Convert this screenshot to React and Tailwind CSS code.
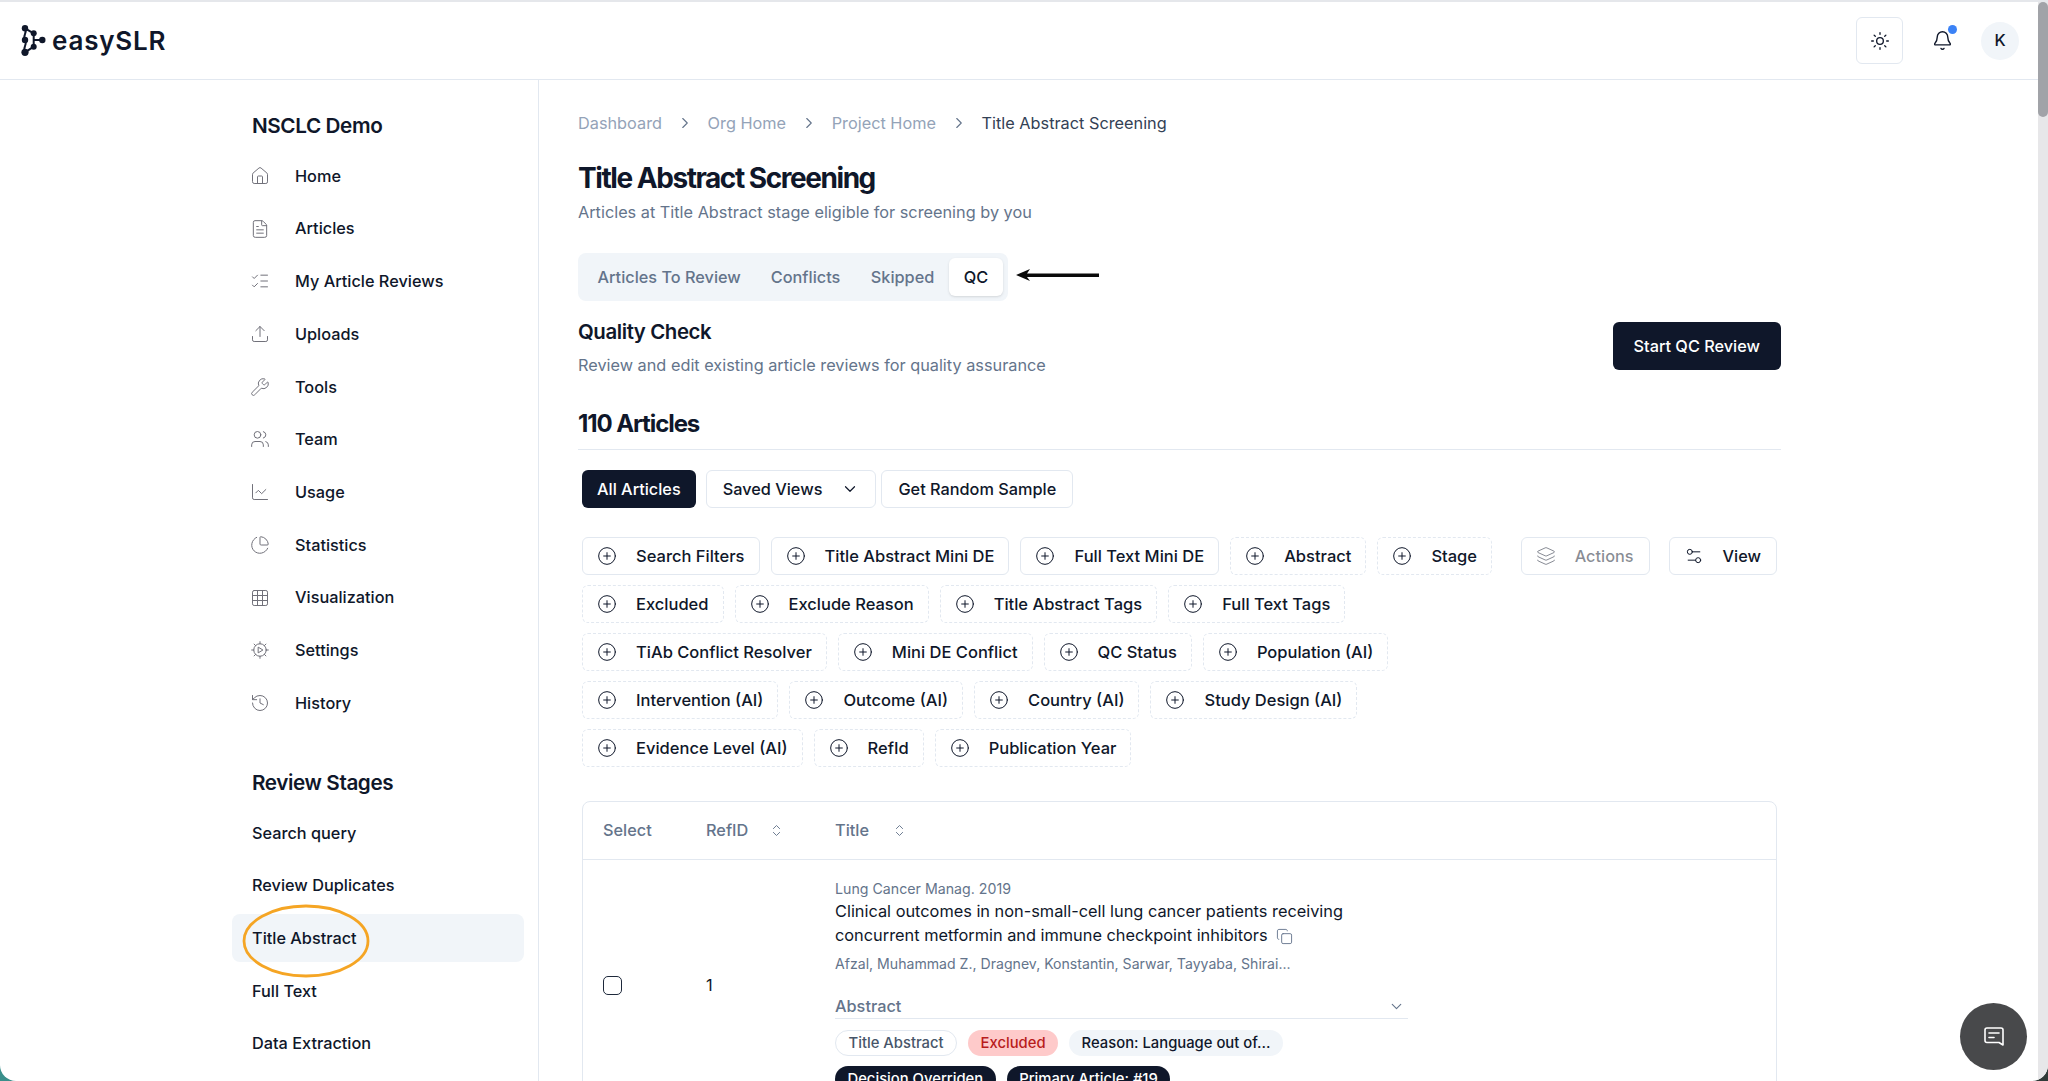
import React from 'react';
import {
  Home, FileText, ListChecks, Upload, Wrench, Users, ChartLine, ChartPie, Grid3x3, History,
  ChevronRight, ChevronDown, ChevronsUpDown, CirclePlus, Layers, Settings2, Sun, Bell, Copy,
} from 'lucide-react';

// the gear in the picture has small teeth and a play triangle inside
const GearPlay = ({ size, strokeWidth, className }) => (
  <svg width={size} height={size} viewBox="0 0 24 24" fill="none" stroke="currentColor" strokeWidth={strokeWidth} strokeLinejoin="round" strokeLinecap="round" className={className}>
    <circle cx="12" cy="12" r="7.5" />
    <path d="M10.2 8.8 L15.5 12 L10.2 15.2 Z" />
    <path d="M12 2 V4.5 M12 19.5 V22 M2 12 H4.5 M19.5 12 H22 M4.9 4.9 L6.7 6.7 M17.3 17.3 L19.1 19.1 M4.9 19.1 L6.7 17.3 M17.3 6.7 L19.1 4.9" />
  </svg>
);

const navItems = [
  { label: 'Home', icon: Home },
  { label: 'Articles', icon: FileText },
  { label: 'My Article Reviews', icon: ListChecks },
  { label: 'Uploads', icon: Upload },
  { label: 'Tools', icon: Wrench },
  { label: 'Team', icon: Users },
  { label: 'Usage', icon: ChartLine },
  { label: 'Statistics', icon: ChartPie },
  { label: 'Visualization', icon: Grid3x3 },
  { label: 'Settings', icon: GearPlay },
  { label: 'History', icon: History },
];

const stages = ['Search query', 'Review Duplicates', 'Title Abstract', 'Full Text', 'Data Extraction'];

const filters = [
  { label: 'Search Filters', solid: true },
  { label: 'Title Abstract Mini DE', solid: true },
  { label: 'Full Text Mini DE', solid: true },
  { label: 'Abstract' },
  { label: 'Stage' },
  { label: 'Excluded' },
  { label: 'Exclude Reason' },
  { label: 'Title Abstract Tags' },
  { label: 'Full Text Tags' },
  { label: 'TiAb Conflict Resolver' },
  { label: 'Mini DE Conflict' },
  { label: 'QC Status' },
  { label: 'Population (AI)' },
  { label: 'Intervention (AI)' },
  { label: 'Outcome (AI)' },
  { label: 'Country (AI)' },
  { label: 'Study Design (AI)' },
  { label: 'Evidence Level (AI)' },
  { label: 'RefId' },
  { label: 'Publication Year' },
];

const Logo = () => (
  <svg width="28" height="36" viewBox="0 0 28 36" className="shrink-0">
    <g fill="none" stroke="#0f172a" strokeWidth="2">
      <path d="M5 5.3 C8 9 2 13 5 17 C8 21 2 25 5 29.3" />
      <path d="M13.7 10.3 V23.7" />
      <path d="M5 29.3 L13.7 23.7" />
      <path d="M5 5.3 L13.7 10.3" />
      <path d="M13.7 17 H22" />
    </g>
    <g fill="#0f172a">
      <circle cx="5" cy="5.3" r="3.2" />
      <circle cx="5" cy="17" r="3.2" />
      <circle cx="5" cy="29.3" r="3.6" />
      <circle cx="13.7" cy="10.3" r="3" />
      <circle cx="13.7" cy="23.7" r="3" />
      <circle cx="22.3" cy="17" r="3.2" />
    </g>
  </svg>
);

const Header = () => (
  <header className="flex h-[78px] items-center justify-between border-b border-[#e2e8f0] pl-5 pr-[19px]">
    <div className="flex items-center gap-[4px]">
      <Logo />
      <span className="text-[26px] font-semibold tracking-[0.8px] text-[#0f172a]">easySLR</span>
    </div>
    <div className="flex items-center">
      <button className="flex h-[47px] w-[47px] items-center justify-center rounded-md border border-[#e2e8f0]">
        <Sun size={20} strokeWidth={1.6} className="text-[#0f172a]" />
      </button>
      <div className="relative ml-[20px] flex h-[38px] w-[38px] items-center justify-center">
        <Bell size={21} strokeWidth={1.6} className="text-[#0f172a]" />
        <span className="absolute right-[4px] top-[3px] h-[9px] w-[9px] rounded-full bg-[#3b82f6]" />
      </div>
      <div className="ml-[20px] flex h-[38px] w-[38px] items-center justify-center rounded-full bg-[#f1f5f9] text-[16.3px] font-medium text-[#0f172a]">
        K
      </div>
    </div>
  </header>
);

const Sidebar = () => (
  <aside className="w-[539px] shrink-0 border-r border-[#e2e8f0] pl-[232px] pr-[14px] pt-[32px]">
    <h2 className="mb-[12px] pl-5 text-[20.7px] font-semibold leading-[28px] tracking-[-0.4px] text-[#0f172a]">NSCLC Demo</h2>
    {navItems.map(({ label, icon: Icon }) => (
      <div key={label} className="mb-[4.7px] flex h-[48px] items-center pl-5 text-[16.3px] font-medium text-[#0f172a]">
        <Icon size={20} strokeWidth={1.2} className="-ml-[2px] mr-[25px] text-[#71717a]" />
        {label}
      </div>
    ))}
    <h2 className="mb-[12px] mt-[42px] pl-5 text-[20.7px] font-semibold leading-[28px] tracking-[-0.4px] text-[#0f172a]">Review Stages</h2>
    {stages.map(label => (
      <div
        key={label}
        className={`mb-[4.7px] flex h-[48px] items-center rounded-lg pl-5 text-[16.3px] font-medium text-[#0f172a] ${label === 'Title Abstract' ? 'bg-[#f1f5f9]' : ''}`}
      >
        {label}
      </div>
    ))}
  </aside>
);

const FilterChip = ({ label, solid }) => (
  <button className={`flex h-[38px] items-center gap-[19px] rounded-md border border-[#e2e8f0] pl-[14px] pr-[14px] text-[16.5px] font-medium text-[#0f172a] ${solid ? 'border-solid' : 'border-dashed'}`}>
    <CirclePlus size={20} strokeWidth={1.2} />
    {label}
  </button>
);

const Pill = ({ className, children }) => (
  <span className={`flex h-[26px] items-center rounded-full px-[12.5px] text-[14.8px] font-medium ${className}`}>{children}</span>
);

const Main = () => (
  <main className="min-w-0 flex-1 pl-[39px] pr-[257px] pt-[31px]">
    <nav className="flex h-6 items-center text-[16.3px] text-[#94a3b8]">
      <span>Dashboard</span>
      <ChevronRight size={18} strokeWidth={1.5} className="mx-[13.8px] text-[#64748b]" />
      <span>Org Home</span>
      <ChevronRight size={18} strokeWidth={1.5} className="mx-[13.8px] text-[#64748b]" />
      <span>Project Home</span>
      <ChevronRight size={18} strokeWidth={1.5} className="mx-[13.8px] text-[#64748b]" />
      <span className="text-[#334155]">Title Abstract Screening</span>
    </nav>

    <h1 className="mt-[25px] text-[28px] font-bold leading-[36px] tracking-[-1.45px] text-[#0f172a]">Title Abstract Screening</h1>
    <p className="mt-[4px] text-[16.3px] leading-6 text-[#64748b]">Articles at Title Abstract stage eligible for screening by you</p>

    <div className="relative mt-[29px] flex h-[48px] w-fit items-center rounded-lg bg-[#f1f5f9] px-[5px] text-[16.3px] font-medium text-[#64748b]">
      <span className="px-[14.5px]">Articles To Review</span>
      <span className="px-[15.5px]">Conflicts</span>
      <span className="px-[15px]">Skipped</span>
      <span className="flex h-[38px] items-center rounded-md bg-white px-[14.5px] text-[#0f172a] shadow-sm">QC</span>
      <svg width="84" height="14" viewBox="0 0 84 14" className="absolute left-[438px] top-[15px]">
        <path d="M0 7 L14 1 L11 5.5 H83 V9 H11 L14 13 Z" fill="#0a0a0a" />
      </svg>
    </div>

    <div className="mt-[17px] flex items-start justify-between">
      <div>
        <h3 className="text-[20.4px] font-semibold leading-[28px] tracking-[-0.4px] text-[#0f172a]">Quality Check</h3>
        <p className="mt-[7px] text-[16.3px] leading-6 text-[#64748b]">Review and edit existing article reviews for quality assurance</p>
      </div>
      <button className="mt-[4px] flex h-[48px] items-center rounded-md bg-[#0f172a] px-[21px] text-[16.3px] font-medium text-white">Start QC Review</button>
    </div>

    <h3 className="mt-[31px] border-b border-[#e2e8f0] pb-[9px] text-[24px] font-bold leading-[32px] tracking-[-1.1px] text-[#0f172a]">110 Articles</h3>

    <div className="mx-1 mt-[20px]">
      <div className="flex gap-[10px] text-[16.3px] font-medium text-[#0f172a]">
        <button className="flex h-[38px] items-center rounded-md bg-[#0f172a] px-[15px] text-white">All Articles</button>
        <button className="flex h-[38px] items-center rounded-md border border-[#e2e8f0] pl-4 pr-[16px]">
          Saved Views
          <ChevronDown size={18} strokeWidth={1.6} className="ml-[19px]" />
        </button>
        <button className="-ml-[5px] flex h-[38px] items-center rounded-md border border-[#e2e8f0] px-[16px]">Get Random Sample</button>
      </div>

      <div className="mt-[29px] flex items-start justify-between">
        <div className="flex w-[930px] flex-wrap gap-x-[11px] gap-y-[10px]">
          {filters.map(f => <FilterChip key={f.label} {...f} />)}
        </div>
        <div className="flex gap-[19px]">
          <button className="flex h-[38px] items-center gap-[19px] rounded-md border border-[#e2e8f0] pl-[14px] pr-[15px] text-[16.3px] font-medium text-[#0f172a]/50">
            <Layers size={20} strokeWidth={1.2} />
            Actions
          </button>
          <button className="flex h-[38px] items-center gap-[19px] rounded-md border border-[#e2e8f0] pl-[14px] pr-[15px] text-[16.3px] font-medium text-[#0f172a]">
            <Settings2 size={20} strokeWidth={1.2} />
            View
          </button>
        </div>
      </div>

      <div className="mt-[34px] rounded-lg border border-[#e2e8f0]">
        <div className="flex h-[58px] items-center border-b border-[#e2e8f0] text-[16.3px] font-medium text-[#64748b]">
          <span className="w-[123px] pl-5">Select</span>
          <span className="flex w-[129px] items-center">
            RefID <ChevronsUpDown size={15} strokeWidth={1.5} className="ml-[21px]" />
          </span>
          <span className="flex items-center">
            Title <ChevronsUpDown size={15} strokeWidth={1.5} className="ml-[23px]" />
          </span>
        </div>
        <div className="flex items-center pt-[19px]">
          <div className="w-[123px] pl-5">
            <div className="h-[19px] w-[19px] rounded-[5px] border border-[#1e293b]" />
          </div>
          <span className="w-[129px] text-[16.3px] text-[#0f172a]">1</span>
          <div className="w-[573px]">
            <p className="text-[14.2px] leading-5 text-[#64748b]">Lung Cancer Manag. 2019</p>
            <p className="text-[16.33px] leading-6 text-[#0f172a]">
              Clinical outcomes in non-small-cell lung cancer patients receiving concurrent metformin and immune checkpoint inhibitors
              <Copy size={17} strokeWidth={1.3} className="ml-2 inline text-[#64748b]" />
            </p>
            <p className="mt-[7px] text-[14.1px] leading-5 text-[#64748b]">Afzal, Muhammad Z., Dragnev, Konstantin, Sarwar, Tayyaba, Shirai...</p>
            <div className="mt-[20px] flex h-[25px] items-center justify-between border-b border-[#e2e8f0] pr-[3px] text-[16.3px] font-medium text-[#64748b]">
              Abstract
              <ChevronDown size={17} strokeWidth={1.6} />
            </div>
            <div className="mt-[11px] flex gap-[11px]">
              <Pill className="border border-[#e2e8f0] text-[#475569]">Title Abstract</Pill>
              <Pill className="bg-[#fecaca] text-[#b91c1c]">Excluded</Pill>
              <Pill className="bg-[#f1f5f9] text-[#0f172a]">Reason: Language out of...</Pill>
            </div>
            <div className="mt-[10px] flex gap-[11px]">
              <Pill className="bg-[#0f172a] text-white">Decision Overriden</Pill>
              <Pill className="bg-[#0f172a] text-white">Primary Article: #19</Pill>
            </div>
          </div>
        </div>
      </div>
    </div>
  </main>
);

export default function App() {
  return (
    <div className="relative h-[1081px] w-[2048px] overflow-hidden bg-gradient-to-r from-[#3a8f8b] to-[#2f3a38] font-['Inter',sans-serif]">
      <div className="flex h-full flex-col overflow-hidden rounded-b-[16px] border-t-2 border-[#e5e7eb] bg-white">
        <div className="flex min-h-0 flex-1">
          <div className="flex min-w-0 flex-1 flex-col">
            <Header />
            <div className="flex min-h-0 flex-1 overflow-hidden">
              <Sidebar />
              <Main />
            </div>
          </div>
          <div className="w-[10px] shrink-0 bg-[#e7e7e9]">
            <div className="h-[115px] rounded-full bg-[#a1a3a8]" />
          </div>
        </div>
      </div>

      {/* annotation round the active stage */}
      <svg width="130" height="76" viewBox="0 0 130 76" className="absolute left-[241px] top-[903px]">
        <ellipse cx="65" cy="38" rx="62" ry="35" fill="none" stroke="#f5a524" strokeWidth="2.8" />
      </svg>

      <button className="absolute left-[1960px] top-[1003px] flex h-[67px] w-[67px] items-center justify-center rounded-full bg-[#48494b]">
        <svg width="24" height="24" viewBox="0 0 24 24" fill="none" stroke="white" strokeWidth="1.6" strokeLinecap="round" strokeLinejoin="round">
          <path d="M5 3 H19 A2 2 0 0 1 21 5 V20 L17 17.5 H5 A2 2 0 0 1 3 15.5 V5 A2 2 0 0 1 5 3 Z" />
          <path d="M7 8 H17" />
          <path d="M7 12.5 H12" />
        </svg>
      </button>
    </div>
  );
}
